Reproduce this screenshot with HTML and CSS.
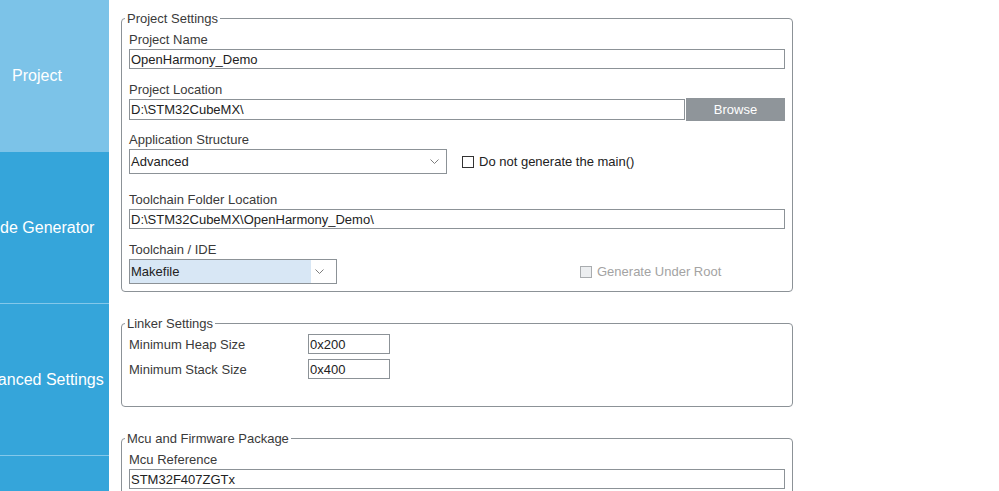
FILE: index.html
```html
<!DOCTYPE html>
<html>

<head>
    <title>Project Manager</title>
    <link rel="stylesheet" href="styles.css">
</head>

<body>
    <div class="app">
        <nav class="sidebar">
            <div class="tab tab-active">Project</div>
            <div class="tab">Code Generator</div>
            <div class="tab">Advanced Settings</div>
            <div class="tab"></div>
        </nav>

        <main class="settings">
            <fieldset class="group group-project">
                <legend>Project Settings</legend>

                <label class="field-label" for="projectName">Project Name</label>
                <input type="text" class="text-input" id="projectName" value="OpenHarmony_Demo">

                <label class="field-label row-gap label-tight" for="projectLocation">Project Location</label>
                <div class="location-row">
                    <input type="text" class="text-input" id="projectLocation" value="D:\STM32CubeMX\">
                    <button type="button" class="browse-button">Browse</button>
                </div>

                <label class="field-label row-gap-small">Application Structure</label>
                <div class="option-row">
                    <div class="dropdown dropdown-structure">
                        <span class="dropdown-value">Advanced</span>
                        <span class="dropdown-arrow">
                            <svg width="9" height="5" viewBox="0 0 9 5"><path d="M0.5 0.5 L4.5 4.5 L8.5 0.5" fill="none" stroke="#7d7d7d" stroke-width="1"/></svg>
                        </span>
                    </div>
                    <label class="check check-main">
                        <span class="check-box"></span>
                        Do not generate the main()
                    </label>
                </div>

                <label class="field-label row-gap-large" for="toolchainFolder">Toolchain Folder Location</label>
                <input type="text" class="text-input" id="toolchainFolder" value="D:\STM32CubeMX\OpenHarmony_Demo\">

                <label class="field-label row-gap">Toolchain / IDE</label>
                <div class="option-row">
                    <div class="dropdown dropdown-toolchain">
                        <span class="dropdown-value">Makefile</span>
                        <span class="dropdown-arrow">
                            <svg width="9" height="5" viewBox="0 0 9 5"><path d="M0.5 0.5 L4.5 4.5 L8.5 0.5" fill="none" stroke="#7d7d7d" stroke-width="1"/></svg>
                        </span>
                    </div>
                    <label class="check check-disabled">
                        <span class="check-box"></span>
                        Generate Under Root
                    </label>
                </div>
            </fieldset>

            <fieldset class="group group-linker">
                <legend>Linker Settings</legend>
                <div class="linker-row">
                    <label class="linker-label" for="heapSize">Minimum Heap Size</label>
                    <input type="text" class="text-input size-input" id="heapSize" value="0x200">
                </div>
                <div class="linker-row">
                    <label class="linker-label" for="stackSize">Minimum Stack Size</label>
                    <input type="text" class="text-input size-input" id="stackSize" value="0x400">
                </div>
            </fieldset>

            <fieldset class="group group-mcu">
                <legend>Mcu and Firmware Package</legend>
                <label class="field-label" for="mcuRef">Mcu Reference</label>
                <input type="text" class="text-input" id="mcuRef" value="STM32F407ZGTx">
            </fieldset>
        </main>
    </div>
</body>

</html>
```

FILE: styles.css
```css
html,
body {
    margin: 0;
    padding: 0;
    height: 100%;
    overflow: hidden;
    background-color: #ffffff;
}

body {
    font-family: "Liberation Sans", Arial, sans-serif;
    font-size: 13px;
    color: #3a3a3a;
}

.app {
    display: flex;
    height: 491px;
}

/* left navigation, partly scrolled out of view */
.sidebar {
    flex: 0 0 144px;
    margin-left: -35px;
    background-color: #35a5da;
    display: flex;
    flex-direction: column;
}

.tab {
    flex-shrink: 0;
    height: 151px;
    border-bottom: 1px solid #84c8ea;
    display: flex;
    align-items: center;
    justify-content: center;
    color: #ffffff;
    font-size: 16px;
    white-space: nowrap;
}

.tab-active {
    background-color: #7cc3e8;
    border-bottom-color: #7cc3e8;
}

.settings {
    padding: 11px 0 0 12px;
}

.group {
    box-sizing: border-box;
    width: 672px;
    min-width: 0;
    margin: 0 0 24px 0;
    padding: 6px 7px 7px 7px;
    border: 1px solid #8c9297;
    border-radius: 4px;
}

.group legend {
    padding: 0 2px;
    margin-left: -4px;
    line-height: 15px;
}

.group-linker {
    padding: 3px 7px 27px 7px;
}

.field-label {
    display: block;
    line-height: 15px;
    margin-bottom: 2px;
}

.row-gap {
    margin-top: 13px;
}

.label-tight {
    margin-bottom: 1px;
}

.row-gap-small {
    margin-top: 11px;
    margin-bottom: 2px;
}

.row-gap-large {
    margin-top: 18px;
}

.text-input {
    display: block;
    box-sizing: border-box;
    width: 100%;
    height: 20px;
    margin: 0;
    padding: 0 1px;
    border: 1px solid #8c9297;
    border-radius: 0;
    font: inherit;
    color: #222222;
    background-color: #ffffff;
    outline: none;
}

.location-row {
    display: flex;
    align-items: center;
    height: 23px;
}

.location-row .text-input {
    flex: 1;
    height: 21px;
}

.browse-button {
    flex: 0 0 99px;
    height: 23px;
    margin-left: 1px;
    padding: 0;
    border: none;
    background-color: #8f959a;
    color: #ffffff;
    font: inherit;
}

.option-row {
    display: flex;
    align-items: center;
}

.dropdown {
    box-sizing: border-box;
    display: flex;
    height: 25px;
    border: 1px solid #8c9297;
    color: #222222;
}

.dropdown-value {
    flex: 1;
    display: flex;
    align-items: center;
    padding-left: 1px;
}

.dropdown-arrow {
    display: flex;
    align-items: center;
    padding: 0 7px 0 4px;
}

.dropdown-structure {
    width: 318px;
}

.dropdown-toolchain {
    width: 208px;
}

.dropdown-toolchain .dropdown-value {
    background-color: #d8e7f5;
}

.dropdown-toolchain .dropdown-arrow {
    padding-right: 12px;
}

.check {
    display: flex;
    align-items: center;
    color: #222222;
}

.check-box {
    box-sizing: border-box;
    width: 12px;
    height: 12px;
    margin-right: 5px;
    border: 1px solid #333333;
    background-color: #ffffff;
}

.check-main {
    margin-left: 15px;
}

.check-disabled {
    margin-left: 243px;
    color: #a3a3a3;
}

.check-disabled .check-box {
    border-color: #a9acaf;
    background-color: #eceef0;
}

.linker-row {
    display: flex;
    align-items: center;
    height: 20px;
    margin-bottom: 5px;
}

.linker-row:last-child {
    margin-bottom: 0;
}

.linker-label {
    flex: 0 0 179px;
    line-height: 15px;
}

.size-input {
    width: 82px;
}
```
